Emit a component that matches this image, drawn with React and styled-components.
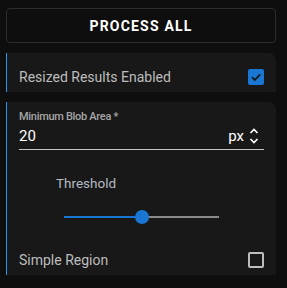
import React from "react";
import styled, { createGlobalStyle } from "styled-components";

const GlobalStyle = createGlobalStyle`
  body {
    margin: 0;
    background: #0e0e0e;
    font-family: Roboto, "Liberation Sans", sans-serif;
  }
`;

const Page = styled.div`
  width: 270px;
  padding: 8px 11px 11px 6px;
  display: flex;
  flex-direction: column;
  gap: 10px;
`;

const ProcessButton = styled.button`
  height: 35px;
  background: transparent;
  border: 1px solid #2c2c2c;
  border-radius: 4px;
  color: #ffffff;
  font-family: Roboto, "Liberation Sans", sans-serif;
  font-weight: 700;
  font-size: 14px;
  letter-spacing: 1.2px;
  cursor: pointer;
`;

const Card = styled.div`
  background: #181818;
  border-left: 1px solid #2196f3;
  border-top-right-radius: 8px;
  padding: 0 12px;
  display: flex;
  flex-direction: column;
`;

const Row = styled.div`
  display: flex;
  align-items: center;
  justify-content: space-between;
  height: ${({ $h }) => $h || 32}px;
  margin-top: ${({ $top }) => $top || 0}px;
`;

const RowLabel = styled.span`
  color: #bdbdbd;
  font-size: 14px;
`;

const Box = styled.span`
  width: 16px;
  height: 16px;
  box-sizing: border-box;
  border-radius: 2px;
  display: flex;
  align-items: center;
  justify-content: center;
  background: ${({ $checked }) => ($checked ? "#1976d2" : "transparent")};
  border: ${({ $checked }) => ($checked ? "none" : "2px solid #bdbdbd")};
`;

const Checkbox = ({ checked }) => (
  <Box $checked={checked}>
    {checked && (
      <svg width="12" height="12" viewBox="0 0 12 12">
        <path d="M2 6.2 L4.8 9 L10.2 3.4" fill="none" stroke="#151515" strokeWidth="1.8" />
      </svg>
    )}
  </Box>
);

const Field = styled.div`
  padding-top: 8px;
  display: flex;
  flex-direction: column;
`;

const FieldLabel = styled.label`
  color: #a6a6a6;
  font-size: 11px;
  font-weight: 500;
  letter-spacing: -0.3px;
`;

const InputLine = styled.div`
  display: flex;
  align-items: center;
  height: 26px;
  padding-right: 5px;
  border-bottom: 1px solid #c4c4c4;
`;

const Value = styled.span`
  flex: 1;
  color: #ffffff;
  font-size: 15px;
`;

const Unit = styled.span`
  color: #ffffff;
  font-size: 15px;
  margin-right: 5px;
`;

const SliderBlock = styled.div`
  display: flex;
  flex-direction: column;
  padding: 25px 0 0 37px;
`;

const SliderTitle = styled.span`
  color: #b4bac4;
  font-size: 13.5px;
`;

const Track = styled.div`
  position: relative;
  width: 155px;
  height: 2px;
  margin: 25px 0 0 8px;
  background: #8a8a8a;
`;

const Fill = styled.div`
  height: 2px;
  background: #1976d2;
`;

const Thumb = styled.div`
  position: absolute;
  top: -6px;
  width: 14px;
  height: 14px;
  margin-left: -7px;
  border-radius: 50%;
  background: #1976d2;
`;

const Slider = ({ value }) => (
  <Track>
    <Fill style={{ width: `${value}%` }} />
    <Thumb style={{ left: `${value}%` }} />
  </Track>
);

const Spinner = () => (
  <svg width="10" height="18" viewBox="0 0 10 18">
    <path d="M1.5 6 L5 2.5 L8.5 6" fill="none" stroke="#ffffff" strokeWidth="1.6" />
    <path d="M1.5 12 L5 15.5 L8.5 12" fill="none" stroke="#ffffff" strokeWidth="1.6" />
  </svg>
);

export default function App() {
  return (
    <>
      <GlobalStyle />
      <Page>
        <ProcessButton>PROCESS ALL</ProcessButton>
        <Card>
          <Row $top={8} $h={31}>
            <RowLabel>Resized Results Enabled</RowLabel>
            <Checkbox checked />
          </Row>
        </Card>
        <Card>
          <Field>
            <FieldLabel>Minimum Blob Area *</FieldLabel>
            <InputLine>
              <Value>20</Value>
              <Unit>px</Unit>
              <Spinner />
            </InputLine>
          </Field>
          <SliderBlock>
            <SliderTitle>Threshold</SliderTitle>
            <Slider value={50} />
          </SliderBlock>
          <Row $top={26} $h={31}>
            <RowLabel>Simple Region</RowLabel>
            <Checkbox />
          </Row>
        </Card>
      </Page>
    </>
  );
}
